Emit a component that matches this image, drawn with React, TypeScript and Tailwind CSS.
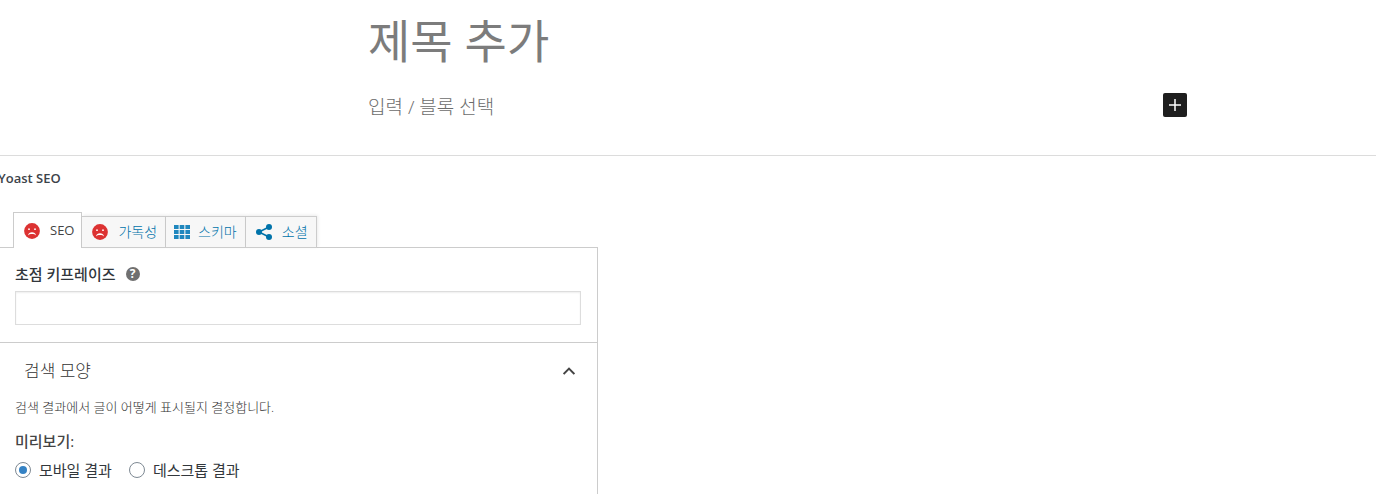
import React, { useState } from 'react';

type Preview = 'mobile' | 'desktop';

const SadFaceIcon = () => (
  <svg className="h-4 w-4 shrink-0" viewBox="0 0 16 16" aria-hidden="true">
    <circle cx="8" cy="8" r="7.9" fill="#dc3232" />
    <circle cx="5" cy="6.2" r="0.9" fill="#fff" />
    <circle cx="11" cy="6.2" r="0.9" fill="#fff" />
    <path
      d="M3.9 12.4C4.4 10.2 6 9.2 8 9.2s3.6 1 4.1 3.2C11 11.4 9.700 11 8 11s-3 .4-4.100 1.400z"
      fill="#fff"
    />
  </svg>
);

const GridIcon = () => (
  <svg className="h-4 w-4 shrink-0" viewBox="0 0 16 16" fill="#1f87be" aria-hidden="true">
    {[1, 6, 11].map((y) =>
      [0, 5.7, 11.4].map((x) => <rect key={`${x}-${y}`} x={x} y={y} width="4.6" height="4" />)
    )}
  </svg>
);

const ShareIcon = () => (
  <svg className="h-4 w-4 shrink-0" viewBox="0 0 16 16" fill="#0073aa" aria-hidden="true">
    <path d="M13 3L3 8l10 5" fill="none" stroke="#0073aa" strokeWidth="1.6" />
    <circle cx="3" cy="8" r="3" />
    <circle cx="13" cy="3" r="3" />
    <circle cx="13" cy="13" r="3" />
  </svg>
);

const tabs = [
  { id: 'seo', label: 'SEO', icon: <SadFaceIcon />, spacing: 'gap-[10px] pl-[10px] pr-[7px]' },
  { id: 'readability', label: '가독성', icon: <SadFaceIcon />, spacing: 'gap-[10px] pl-[10px] pr-2' },
  { id: 'schema', label: '스키마', icon: <GridIcon />, spacing: 'gap-2 px-2' },
  { id: 'social', label: '소셜', icon: <ShareIcon />, spacing: 'gap-[10px] pl-[10px] pr-2' },
];

const EditorHeader = () => (
  <header className="border-b border-[#dcdcdc] pt-2 pb-9 pl-[368px]">
    <div className="max-w-[819px]">
      <input
        type="text"
        aria-label="제목 추가"
        placeholder="제목 추가"
        className="block h-16 w-full text-[46px] outline-none placeholder:text-[#7c7c7c]"
      />
      <div className="mt-[19px] flex items-center">
        <input
          type="text"
          aria-label="입력 / 블록 선택"
          placeholder="입력 / 블록 선택"
          className="h-7 min-w-0 flex-1 pt-1 text-[19px] font-light outline-none placeholder:text-[#6c6c6c]"
        />
        <button
          type="button"
          aria-label="블록 추가"
          className="flex h-6 w-6 items-center justify-center rounded-xs bg-[#1e1e1e]"
        >
          <svg className="h-3 w-3" viewBox="0 0 12 12" stroke="#fff" strokeWidth="1.5" aria-hidden="true">
            <path d="M6 0v12M0 6h12" />
          </svg>
        </button>
      </div>
    </div>
  </header>
);

export default function App() {
  const [activeTab, setActiveTab] = useState('seo');
  const [keyphrase, setKeyphrase] = useState('');
  const [isOpen, setIsOpen] = useState(true);
  const [preview, setPreview] = useState<Preview>('mobile');

  const radioClass =
    'h-4 w-4 appearance-none rounded-full border border-[#7e8993] bg-white p-[3px] before:block before:h-2 before:w-2 before:rounded-full checked:before:bg-[#3582c4]';

  return (
    <div className="overflow-hidden bg-white font-['Open_Sans','Noto_Sans_CJK_KR',sans-serif] text-[#32373c]">
      <EditorHeader />

      <section>
        <h2 className="-ml-0.5 pt-3 text-[13px] leading-5 font-semibold text-[#3c434a]">Yoast SEO</h2>

        <div className="relative z-10 mt-6 flex items-end pl-[13px]" role="tablist">
          {tabs.map((tab) => {
            const active = tab.id === activeTab;
            return (
              <button
                key={tab.id}
                type="button"
                role="tab"
                aria-selected={active}
                onClick={() => setActiveTab(tab.id)}
                className={`flex items-center border-t border-r border-[#ccc] ${tab.spacing} ${
                  active
                    ? 'h-9 border-l bg-white text-[13px] text-[#444]'
                    : 'h-8 border-b bg-[#f7f7f7] text-sm font-light text-[#0073aa] shadow-[1px_-1px_3px_rgba(0,0,0,0.08)]'
                }`}
              >
                {tab.icon}
                {tab.label}
              </button>
            );
          })}
        </div>

        <div className="-mt-px max-w-[598px] border-t border-r border-[#ccc]">
          <div className="border-b border-[#ccc] pt-[14px] pr-4 pb-[17px] pl-[15px]">
            <div className="flex items-center gap-[10px]">
              <label htmlFor="keyphrase" className="text-[15px] leading-6 font-medium">
                초점 키프레이즈
              </label>
              <button
                type="button"
                aria-label="도움말"
                className="flex h-[14px] w-[14px] items-center justify-center rounded-full bg-[#707070] text-xs leading-none font-bold text-white"
              >
                ?
              </button>
            </div>
            <input
              id="keyphrase"
              type="text"
              value={keyphrase}
              onChange={(e) => setKeyphrase(e.target.value)}
              className="mt-[5px] block h-[34px] w-full border border-[#ddd] px-2 text-sm shadow-[inset_0_1px_2px_rgba(0,0,0,0.07)] outline-none"
            />
          </div>

          <button
            type="button"
            aria-expanded={isOpen}
            onClick={() => setIsOpen(!isOpen)}
            className="flex h-14 w-full items-center justify-between pr-[22px] pl-6 text-[17px] font-light text-[#333]"
          >
            검색 모양
            <svg className="h-3 w-3" viewBox="0 0 12 12" fill="none" stroke="#444" strokeWidth="2" aria-hidden="true">
              <path d={isOpen ? 'M0.6 9L6 3.6L11.4 9' : 'M0.6 3.6L6 9L11.4 3.6'} />
            </svg>
          </button>

          {isOpen && (
            <div className="px-[15px] pb-4">
              <p className="text-[13px] leading-4 font-light text-[#333]">
                검색 결과에서 글이 어떻게 표시될지 결정합니다.
              </p>
              <fieldset className="mt-[14px]">
                <legend className="text-[15px] leading-6 font-medium text-[#444]">미리보기:</legend>
                <div className="mt-[5px] flex gap-[17px] text-[15px] leading-6">
                  <label className="flex items-center gap-2">
                    <input
                      type="radio"
                      name="preview"
                      checked={preview === 'mobile'}
                      onChange={() => setPreview('mobile')}
                      className={radioClass}
                    />
                    모바일 결과
                  </label>
                  <label className="flex items-center gap-2">
                    <input
                      type="radio"
                      name="preview"
                      checked={preview === 'desktop'}
                      onChange={() => setPreview('desktop')}
                      className={radioClass}
                    />
                    데스크톱 결과
                  </label>
                </div>
              </fieldset>
            </div>
          )}
        </div>
      </section>
    </div>
  );
}
